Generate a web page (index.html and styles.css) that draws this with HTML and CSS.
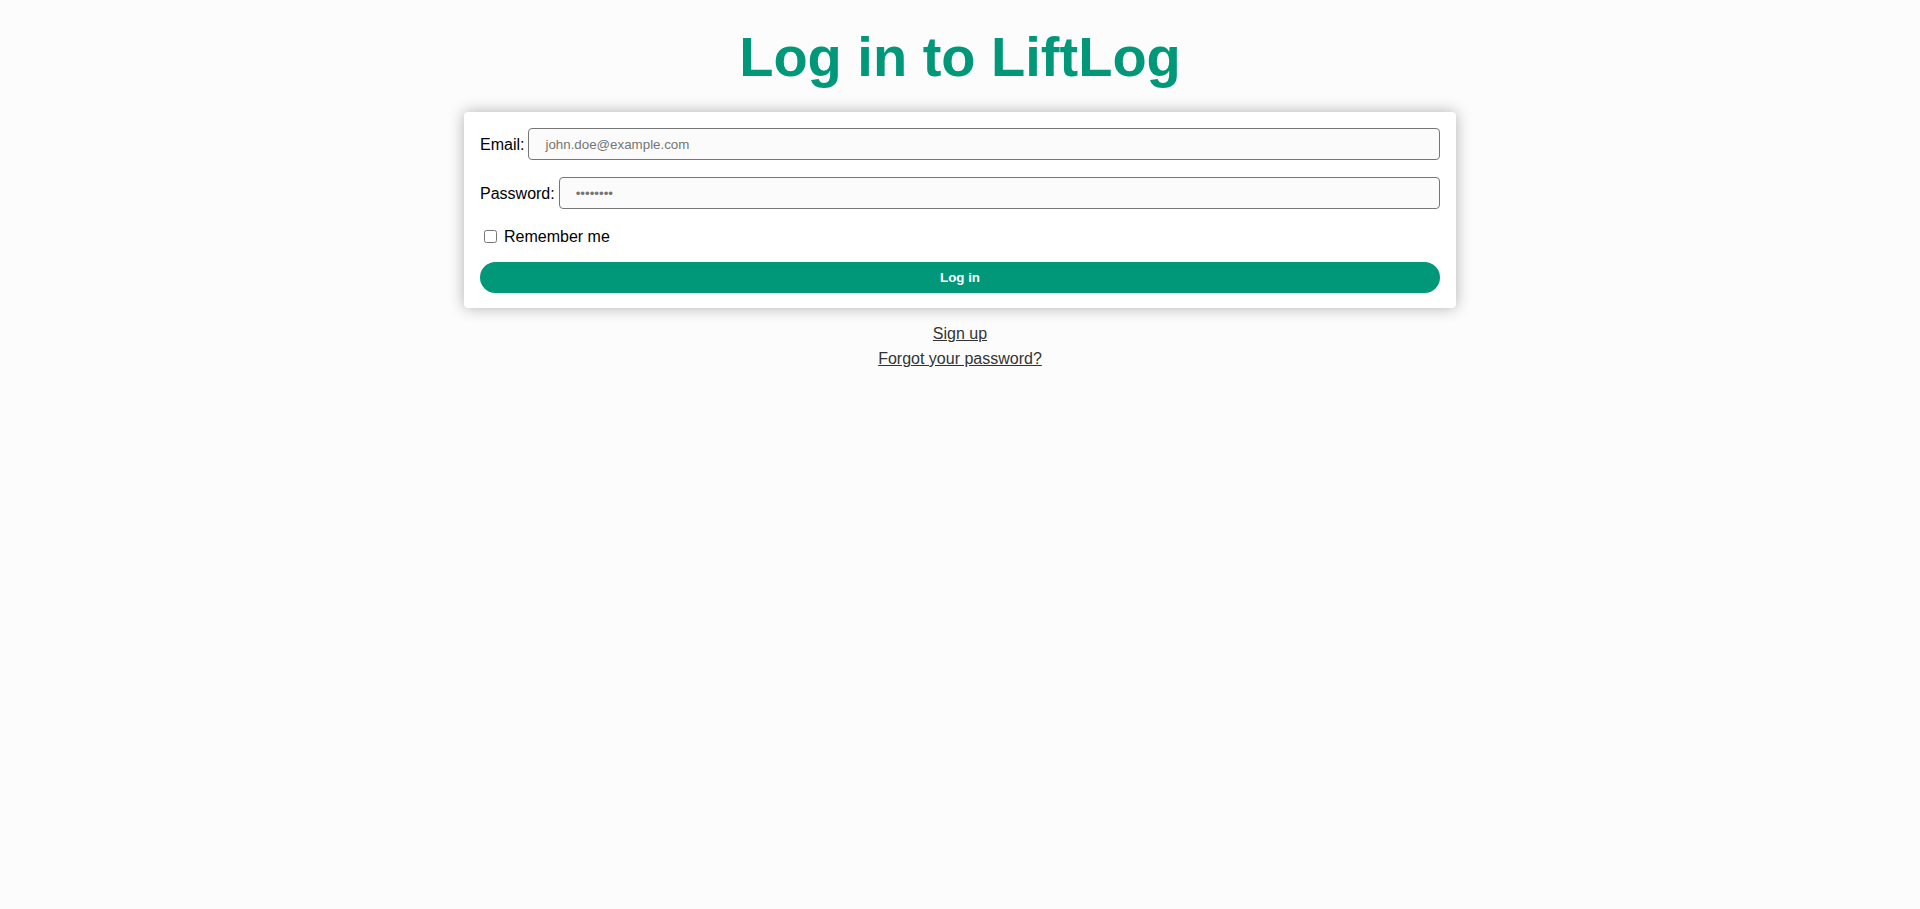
FILE: index.html
```html
<!DOCTYPE html>
<html lang="en">
<head>
<meta charset="utf-8">
<title>Log in to LiftLog</title>
<link rel="stylesheet" href="styles.css">
</head>
<body>
  <h1 class="title">Log in to LiftLog</h1>
  <form class="card">
    <div class="field">
      <label class="field-label" for="email">Email:</label>
      <input class="field-input" id="email" type="email" placeholder="john.doe@example.com">
    </div>
    <div class="field">
      <label class="field-label" for="password">Password:</label>
      <input class="field-input" id="password" type="password" placeholder="••••••••">
    </div>
    <div class="remember">
      <input class="remember-box" id="remember" type="checkbox">
      <label class="remember-label" for="remember">Remember me</label>
    </div>
    <button class="submit" type="button">Log in</button>
  </form>
  <nav class="links">
    <a class="link" href="#">Sign up</a>
    <a class="link" href="#">Forgot your password?</a>
  </nav>
</body>
</html>
```

FILE: styles.css
```css
html, body {
  margin: 0;
  padding: 0;
}

body {
  background: #fcfcfc;
  font-family: "Liberation Sans", Arial, sans-serif;
  font-size: 16px;
  color: #000;
  display: flex;
  flex-direction: column;
  align-items: center;
}

.title {
  margin: 24px 0 23px;
  font-size: 56px;
  font-weight: 700;
  line-height: normal;
  color: #009879;
}

.card {
  width: 992px;
  box-sizing: border-box;
  padding: 16px 16px 15px;
  background: #fff;
  border-radius: 4px;
  box-shadow: 0 0 15px rgba(0, 0, 0, 0.3);
  display: flex;
  flex-direction: column;
}

.field {
  display: flex;
  align-items: center;
  gap: 4px;
  margin-bottom: 17px;
}

.field-label {
  white-space: nowrap;
  padding-top: 2px;
}

.field-input {
  flex: 1;
  height: 32px;
  box-sizing: border-box;
  margin: 0;
  padding: 0 16px;
  border: 1px solid #767676;
  border-radius: 4px;
  background: #fbfbfb;
  font-family: "Liberation Sans", Arial, sans-serif;
  font-size: 13.333px;
  color: #000;
}

.field-input::placeholder {
  color: #757575;
}

.remember {
  display: flex;
  align-items: center;
  height: 21px;
}

.remember-box {
  width: 13px;
  height: 13px;
  margin: 0 0 0 4px;
}

.remember-label {
  margin-left: 7px;
}

.submit {
  margin-top: 15px;
  height: 31px;
  border: none;
  border-radius: 16px;
  background: #009879;
  color: #fff;
  font-family: "Liberation Sans", Arial, sans-serif;
  font-size: 13.333px;
  font-weight: 700;
  cursor: pointer;
}

.links {
  margin-top: 17px;
  display: flex;
  flex-direction: column;
  align-items: center;
  gap: 7px;
}

.link {
  color: #333;
  text-decoration: underline;
}
```
